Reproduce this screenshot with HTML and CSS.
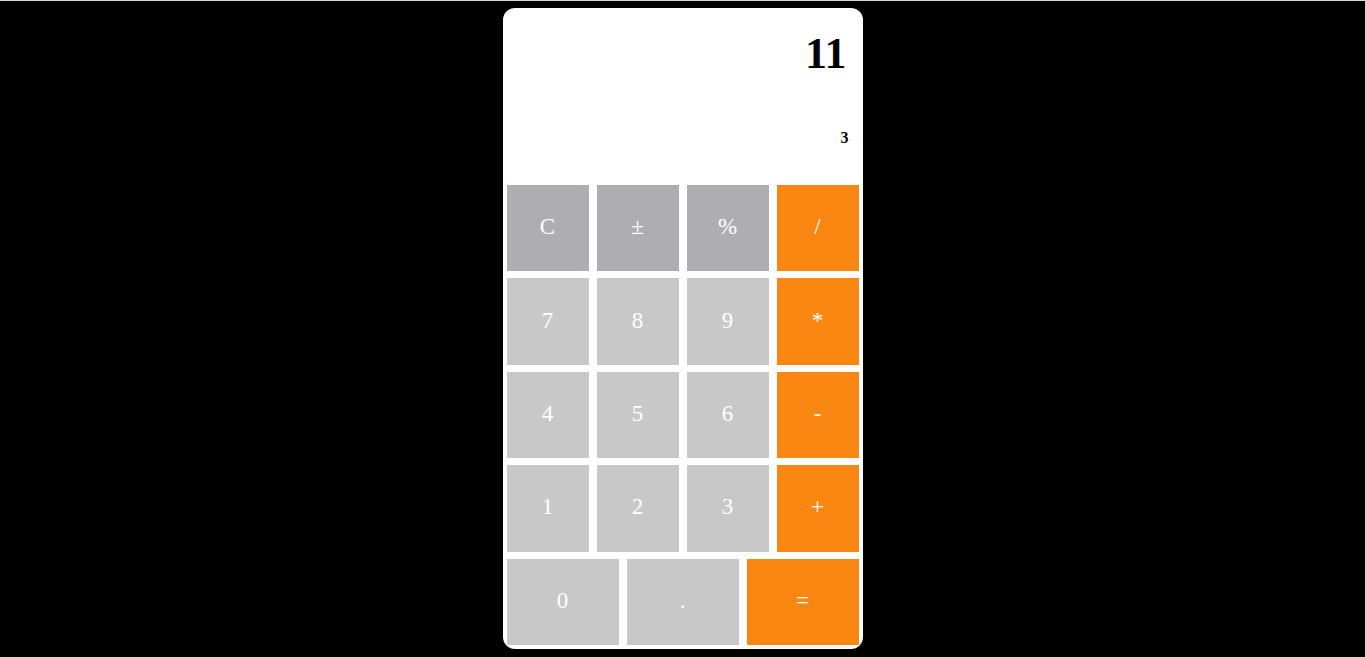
FILE: index.html
```html
<!DOCTYPE html>
<html lang="en">
<head>
<meta charset="utf-8">
<title>Calculator</title>
<link rel="stylesheet" href="styles.css">
</head>
<body>
<div class="page">
  <div class="calc">
    <div class="display">
      <div class="current">11</div>
      <div class="previous">3</div>
    </div>
    <div class="keys">
      <button class="key fn">C</button>
      <button class="key fn">±</button>
      <button class="key fn">%</button>
      <button class="key op">/</button>
      <button class="key num">7</button>
      <button class="key num">8</button>
      <button class="key num">9</button>
      <button class="key op">*</button>
      <button class="key num">4</button>
      <button class="key num">5</button>
      <button class="key num">6</button>
      <button class="key op">-</button>
      <button class="key num">1</button>
      <button class="key num">2</button>
      <button class="key num">3</button>
      <button class="key op">+</button>
      <button class="key num wide">0</button>
      <button class="key num wide">.</button>
      <button class="key op wide">=</button>
    </div>
  </div>
</div>
</body>
</html>
```

FILE: styles.css
```css
html, body {
  margin: 0;
  padding: 0;
  background: #000;
  height: 100%;
}

.page {
  border-top: 1px solid #d9d9d9;
  padding-top: 7px;
  display: flex;
  justify-content: center;
  font-family: "Liberation Serif", "Times New Roman", serif;
}

.calc {
  width: 352px;
  height: 633px;
  padding: 4px;
  background: #fff;
  border-radius: 12px;
  display: flex;
  flex-direction: column;
}

.display {
  height: 173px;
  display: flex;
  flex-direction: column;
  align-items: flex-end;
  padding-right: 12px;
  color: #000;
  font-weight: bold;
}

.current {
  margin-top: 20px;
  font-size: 44px;
  line-height: 1;
}

.previous {
  margin-top: 54px;
  margin-right: -2px;
  font-size: 16px;
  line-height: 1;
}

.keys {
  flex: 1;
  display: grid;
  grid-template-columns: repeat(12, 1fr);
  grid-template-rows: repeat(5, 1fr);
  column-gap: 8px;
  row-gap: 7px;
}

.key {
  grid-column: span 3;
  border: none;
  margin: 0;
  padding: 0 0 2px;
  color: #fff;
  font-family: "Liberation Serif", "Times New Roman", serif;
  font-size: 23px;
  cursor: pointer;
}

.key.wide {
  grid-column: span 4;
}

.fn {
  background: #aeaeb2;
}

.num {
  background: #c8c8c8;
}

.op {
  background: #f98712;
}
```
